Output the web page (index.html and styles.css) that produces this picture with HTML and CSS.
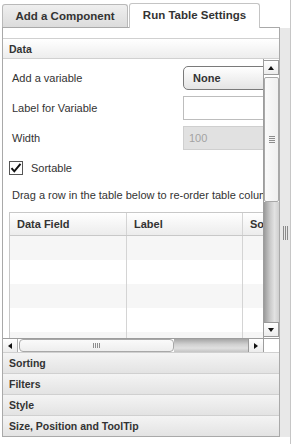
FILE: index.html
```html
<!DOCTYPE html>
<html lang="en">
<head>
    <meta charset="UTF-8">
    <title>Run Table Settings</title>
    <link rel="stylesheet" href="styles.css">
</head>
<body>
    <div class="app">
        <div class="pane">
            <div class="tabs">
                <div class="tab">Add a Component</div>
                <div class="tab active">Run Table Settings</div>
            </div>

            <div class="panel">
                <div class="acc-head">Data</div>
                <div class="acc-body">
                    <div class="scroll-row">
                        <div class="viewport">
                            <div class="form">
                                <label class="form-label">Add a variable</label>
                                <div class="select">None</div>
                                <label class="form-label">Label for Variable</label>
                                <div class="input"></div>
                                <label class="form-label">Width</label>
                                <div class="input disabled">100</div>
                            </div>

                            <div class="check-row">
                                <span class="checkbox">
                                    <svg width="12" height="12" viewBox="0 0 12 12">
                                        <path d="M1.5 6.2 L4.3 9.3 L10.5 1.8" fill="none" stroke="#111" stroke-width="2"/>
                                    </svg>
                                </span>
                                <span>Sortable</span>
                            </div>

                            <p class="hint">Drag a row in the table below to re-order table columns</p>

                            <div class="grid">
                                <div class="grid-row head">
                                    <div class="cell c1">Data Field</div>
                                    <div class="cell c2">Label</div>
                                    <div class="cell c3">Sortable</div>
                                </div>
                                <div class="grid-row odd"><div class="cell c1"></div><div class="cell c2"></div><div class="cell c3"></div></div>
                                <div class="grid-row"><div class="cell c1"></div><div class="cell c2"></div><div class="cell c3"></div></div>
                                <div class="grid-row odd"><div class="cell c1"></div><div class="cell c2"></div><div class="cell c3"></div></div>
                                <div class="grid-row"><div class="cell c1"></div><div class="cell c2"></div><div class="cell c3"></div></div>
                                <div class="grid-row odd"><div class="cell c1"></div><div class="cell c2"></div><div class="cell c3"></div></div>
                            </div>
                        </div>

                        <div class="vscroll">
                            <div class="sbtn"><span class="arrow up"></span></div>
                            <div class="vthumb"><span class="vgrip"></span></div>
                            <div class="vtrack"></div>
                            <div class="sbtn"><span class="arrow down"></span></div>
                        </div>
                    </div>

                    <div class="hscroll-row">
                        <div class="hscroll">
                            <div class="hbtn"><span class="arrow left"></span></div>
                            <div class="hthumb"><span class="hgrip"></span></div>
                            <div class="htrack"></div>
                            <div class="hbtn"><span class="arrow right"></span></div>
                        </div>
                        <div class="corner"></div>
                    </div>
                </div>
                <div class="acc-head">Sorting</div>
                <div class="acc-head">Filters</div>
                <div class="acc-head">Style</div>
                <div class="acc-head last">Size, Position and ToolTip</div>
            </div>
        </div>

        <div class="splitter">
            <div class="split-fill"><span class="split-grip"></span></div>
        </div>
    </div>
</body>
</html>
```

FILE: styles.css
```css
:root {
    --text-color: #333;
    --border-color: #a9a9a9;
    --line-color: #c8c8c8;
}

* {
    margin: 0;
    padding: 0;
    box-sizing: border-box;
}

body {
    background: white;
    color: var(--text-color);
    font-family: 'Liberation Sans', Arial, sans-serif;
    font-size: 11px;
}

.app {
    display: flex;
    height: 444px;
}

.pane {
    width: 280px;
    padding-left: 2px;
}

/* tabs */
.tabs {
    display: flex;
    align-items: flex-end;
    gap: 1px;
    height: 28px;
    border-bottom: 1px solid var(--border-color);
}

.tab {
    width: 126px;
    height: 23px;
    border: 1px solid #b9b9b9;
    border-bottom: none;
    border-radius: 3px 3px 0 0;
    background: linear-gradient(#efefef, #dcdcdc);
    font-size: 11.5px;
    font-weight: bold;
    text-align: center;
    line-height: 22px;
}

.tab.active {
    width: 131px;
    height: 25px;
    margin-bottom: -1px;
    background: white;
    border-color: #c4c4c4;
    line-height: 23px;
}

/* panel + accordion */
.panel {
    border: 1px solid var(--border-color);
    border-top: none;
    padding-top: 10px;
}

.acc-head {
    height: 21px;
    padding-left: 6px;
    border-top: 1px solid #d0d0d0;
    background: linear-gradient(#f4f4f4, #e3e3e3);
    font-size: 10.5px;
    font-weight: bold;
    line-height: 20px;
}

.acc-head:first-child {
    border-bottom: 1px solid #d0d0d0;
    background: linear-gradient(#ffffff, #ededed);
}

.acc-body {
    height: 293px;
}

.scroll-row {
    display: flex;
    height: 279px;
}

.viewport {
    flex: 1;
    overflow: hidden;
    white-space: nowrap;
}

.form {
    display: grid;
    grid-template-columns: 171px 1fr;
    row-gap: 6px;
    padding: 7px 0 0 9px;
    align-items: center;
}

.form-label {
    line-height: 24px;
}

.select, .input {
    width: 110px;
    height: 24px;
}

.select {
    border: 1px solid #7a7a7a;
    border-radius: 5px;
    background: linear-gradient(#ffffff, #e4e4e4);
    font-weight: bold;
    padding-left: 9px;
    line-height: 22px;
}

.input {
    border: 1px solid #bdbdbd;
    background: white;
}

.input.disabled {
    background: #e1e1e1;
    border-color: #cfcfcf;
    color: #a3a3a3;
    padding-left: 5px;
    line-height: 22px;
}

.check-row {
    display: flex;
    align-items: center;
    gap: 8px;
    margin: 11px 0 0 6px;
    height: 14px;
}

.checkbox {
    width: 14px;
    height: 14px;
    border: 1px solid #555;
    background: white;
    display: flex;
    align-items: center;
    justify-content: center;
}

.hint {
    margin: 13px 0 0 9px;
    line-height: 14px;
}

/* data table */
.grid {
    margin: 10px 0 0 6px;
    border-left: 1px solid var(--line-color);
    width: 344px;
}

.grid-row {
    display: flex;
    height: 24px;
}

.grid-row.odd {
    background: #f6f6f6;
}

.grid-row.head {
    border-top: 1px solid var(--line-color);
    border-bottom: 1px solid var(--line-color);
    background: linear-gradient(#ffffff, #ececec);
    font-weight: bold;
    line-height: 22px;
}

.cell {
    border-right: 1px solid #d4d4d4;
    padding-left: 7px;
}

.c1 { width: 117px; }
.c2 { width: 116px; }
.c3 { width: 110px; }

/* scrollbars */
.vscroll {
    width: 16px;
    display: flex;
    flex-direction: column;
    padding: 1px 0;
    border-left: 1px solid #9d9d9d;
}

.sbtn {
    height: 15px;
    border: 1px solid #9a9a9a;
    border-left: none;
    background: linear-gradient(#ffffff, #ececec);
    display: flex;
    align-items: center;
    justify-content: center;
}

.vthumb {
    height: 125px;
    margin-top: 2px;
    border: 1px solid #a8a8a8;
    border-radius: 2px;
    background: linear-gradient(to right, #fafafa, #f0f0f0);
    display: flex;
    align-items: center;
    justify-content: center;
}

.vgrip {
    width: 6px;
    height: 8px;
    background: repeating-linear-gradient(#8c8c8c 0 1px, transparent 1px 2px);
}

.vtrack {
    flex: 1;
    background: linear-gradient(to right, #9a9a9a, #c9c9c9 40%, #e2e2e2 70%, #cfcfcf);
}

.arrow {
    width: 0;
    height: 0;
    border: 3px solid transparent;
}

.arrow.up { border-bottom: 4px solid #111; border-top: none; }
.arrow.down { border-top: 4px solid #111; border-bottom: none; }
.arrow.left { border-right: 4px solid #111; border-left: none; }
.arrow.right { border-left: 4px solid #111; border-right: none; }

.hscroll-row {
    display: flex;
    height: 14px;
    border-top: 1px solid #9d9d9d;
}

.hscroll {
    flex: 1;
    display: flex;
}

.hbtn {
    width: 15px;
    display: flex;
    align-items: center;
    justify-content: center;
    background: linear-gradient(#ffffff, #ececec);
    border-right: 1px solid #b0b0b0;
}

.hbtn:last-child {
    border-left: 1px solid #9a9a9a;
    border-right: none;
}

.hthumb {
    width: 155px;
    margin-left: 1px;
    border: 1px solid #a8a8a8;
    border-radius: 4px;
    background: linear-gradient(#fafafa, #eeeeee);
    display: flex;
    align-items: center;
    justify-content: center;
}

.hgrip {
    width: 8px;
    height: 5px;
    background: repeating-linear-gradient(to right, #8c8c8c 0 1px, transparent 1px 2px);
}

.htrack {
    flex: 1;
    background: linear-gradient(#a5a5a5, #cfcfcf 40%, #e0e0e0 70%, #c4c4c4);
}

.corner {
    width: 16px;
    background: white;
    border-left: 1px solid #9d9d9d;
}

/* splitter */
.splitter {
    width: 11px;
    border-right: 1px solid #c6c6c6;
}

.split-fill {
    height: 409px;
    margin-top: 28px;
    background: #e8e8e8;
    display: flex;
    align-items: center;
    justify-content: center;
}

.split-grip {
    width: 5px;
    height: 14px;
    background: repeating-linear-gradient(to right, #8a8a8a 0 1px, transparent 1px 2px);
}
```
